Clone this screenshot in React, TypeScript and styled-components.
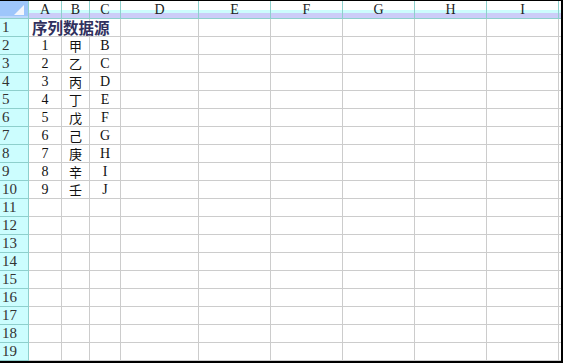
import React from "react";
import styled, {createGlobalStyle} from "styled-components";

const GlobalStyle = createGlobalStyle`
    html, body {
        margin: 0;
        padding: 0;
        background: #ffffff;
    }
`;

const COLS = ["A", "B", "C", "D", "E", "F", "G", "H", "I"];
const WIDTHS = [33, 28, 31, 78, 72, 72, 72, 72, 72];
const STEMS = ["甲", "乙", "丙", "丁", "戊", "己", "庚", "辛", "壬"];
const ROW_COUNT = 19;

const HEAD_BG = "linear-gradient(#ffffff 0, #ffffff 9px, #ccfcfd 9px, #ccfcfd 12px, #cccdf8 12px)";

const Frame = styled('div')`
    width: 563px;
    height: 363px;
    box-sizing: border-box;
    border-top: 1px solid #000000;
    border-right: 2px solid #000000;
    border-bottom: 2px solid #000000;
    background: #ffffff;
    overflow: hidden;
`;

const Grid = styled('div')`
    display: grid;
    grid-template-columns: 29px ${WIDTHS.map(w => w + "px").join(" ")} 1fr;
    grid-auto-rows: 18px;
`;

const Corner = styled('div')`
    position: relative;
    box-sizing: border-box;
    background: linear-gradient(#9ec6fb 0, #9ec6fb 15px, #bcd8fb 15px);
    border-right: 1px solid #8ecfcc;
    border-bottom: 1px solid #8ecfcc;
`;

const CornerMark = styled('div')`
    position: absolute;
    right: 4px;
    bottom: 3px;
    width: 0;
    height: 0;
    border-left: 10px solid transparent;
    border-bottom: 10px solid #f4f6fb;
`;

const ColHead = styled('div')`
    box-sizing: border-box;
    display: flex;
    align-items: center;
    justify-content: center;
    background: ${HEAD_BG};
    border-right: 1px solid #8ecfcc;
    border-bottom: 1px solid #8ecfcc;
    font-family: "Liberation Serif", "DejaVu Serif", serif;
    font-size: 14px;
    line-height: 14px;
    color: #222222;
    overflow: hidden;
`;

const RowHead = styled('div')`
    box-sizing: border-box;
    display: flex;
    align-items: center;
    padding-left: 2px;
    background: #ccfdfe;
    border-right: 1px solid #8ecfcc;
    border-bottom: 1px solid #8ecfcc;
    font-family: "Liberation Serif", "DejaVu Serif", serif;
    font-size: 15px;
    line-height: 15px;
    color: #333333;
    overflow: hidden;
`;

const Cell = styled('div')<{ $align?: "left" | "center" }>`
    box-sizing: border-box;
    display: flex;
    align-items: center;
    justify-content: ${p => p.$align === "left" ? "flex-start" : "center"};
    border-right: 1px solid #cccccc;
    border-bottom: 1px solid #cccccc;
    font-family: "Liberation Serif", "Noto Sans CJK SC", serif;
    font-size: 14px;
    line-height: 14px;
    color: #111111;
    white-space: nowrap;
    min-width: 0;
`;

const Stem = styled('span')`
    font-family: "Noto Sans CJK SC", sans-serif;
    font-size: 13px;
    line-height: 13px;
`;

const Title = styled('span')`
    position: relative;
    z-index: 1;
    padding-left: 3px;
    font-family: "Noto Sans CJK SC", sans-serif;
    font-weight: bold;
    font-size: 15.5px;
    line-height: 15px;
    color: #30305e;
`;

const Filler = styled('div')`
    border-bottom: 1px solid #cccccc;
`;

const HeadFiller = styled('div')`
    background: ${HEAD_BG};
    border-bottom: 1px solid #8ecfcc;
`;

const App: React.FC = () => {
    const rows = Array.from({length: ROW_COUNT}, (_, i) => i + 1);

    const renderCell = (row: number, col: number) => {
        const key = `${row}-${col}`;
        if (row === 1 && col === 0) {
            return <Cell key={key} $align="left"><Title>序列数据源</Title></Cell>;
        }
        if (row >= 2 && row <= 10) {
            const idx = row - 2;
            if (col === 0) return <Cell key={key}>{idx + 1}</Cell>;
            if (col === 1) return <Cell key={key}><Stem>{STEMS[idx]}</Stem></Cell>;
            if (col === 2) return <Cell key={key}>{String.fromCharCode(66 + idx)}</Cell>;
        }
        return <Cell key={key}/>;
    };

    return (
        <>
            <GlobalStyle/>
            <Frame>
                <Grid>
                    <Corner><CornerMark/></Corner>
                    {COLS.map(c => <ColHead key={c}>{c}</ColHead>)}
                    <HeadFiller/>
                    {rows.map(r => (
                        <React.Fragment key={r}>
                            <RowHead>{r}</RowHead>
                            {COLS.map((_, ci) => renderCell(r, ci))}
                            <Filler/>
                        </React.Fragment>
                    ))}
                </Grid>
            </Frame>
        </>
    );
};

export default App;
